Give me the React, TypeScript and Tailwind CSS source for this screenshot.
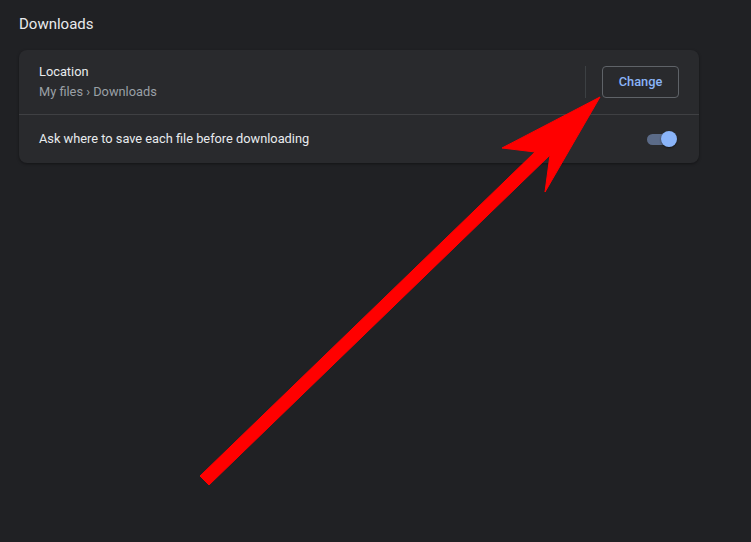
export default function App() {
  return (
    <div className="relative h-[542px] w-[751px] overflow-hidden bg-[#202124] font-['Roboto',sans-serif]">
      <div className="px-[19px] pt-[15px]">
        <h2 className="text-[15px] leading-[18px] text-[#e8eaed]">Downloads</h2>
        <div className="mt-[17px] w-[680px] rounded-lg bg-[#292a2d] shadow-[0_1px_3px_rgba(0,0,0,0.4)]">
          {/* Location row */}
          <div className="flex h-[64px] items-center pl-5 pr-5">
            <div className="flex-1">
              <div className="text-[12.8px] leading-[18px] text-[#e8eaed]">Location</div>
              <div className="mt-[2px] text-[12.8px] leading-[18px] text-[#9aa0a6]">My files › Downloads</div>
            </div>
            <div className="h-8 w-px bg-[#3c4043]" />
            <button className="ml-4 h-8 w-[77px] rounded border border-[#5f6368] text-[12.8px] font-medium text-[#8ab4f8]">
              Change
            </button>
          </div>
          <div className="h-px bg-[#3f4043]" />
          {/* Ask row */}
          <div className="flex h-[48px] items-center pl-5 pr-5">
            <div className="flex-1 text-[12.8px] text-[#e8eaed]">Ask where to save each file before downloading</div>
            <div className="relative mr-[2px] h-[16px] w-[30px]">
              <div className="absolute left-0 top-[3px] h-[11px] w-[26px] rounded-full bg-[#5b6b88]" />
              <div className="absolute right-0 top-0 h-[16px] w-[16px] rounded-full bg-[#8ab4f8] shadow-[0_1px_2px_rgba(0,0,0,0.5)]" />
            </div>
          </div>
        </div>
      </div>
      <svg className="pointer-events-none absolute left-0 top-0" width="751" height="542" viewBox="0 0 751 542">
        <polygon
          points="600,97 502,148 535,152 200,476 209,485 550,155 545,192"
          fill="#ff0000"
          stroke="#ff0000"
          strokeWidth="1"
          strokeLinejoin="round"
        />
      </svg>
    </div>
  )
}
